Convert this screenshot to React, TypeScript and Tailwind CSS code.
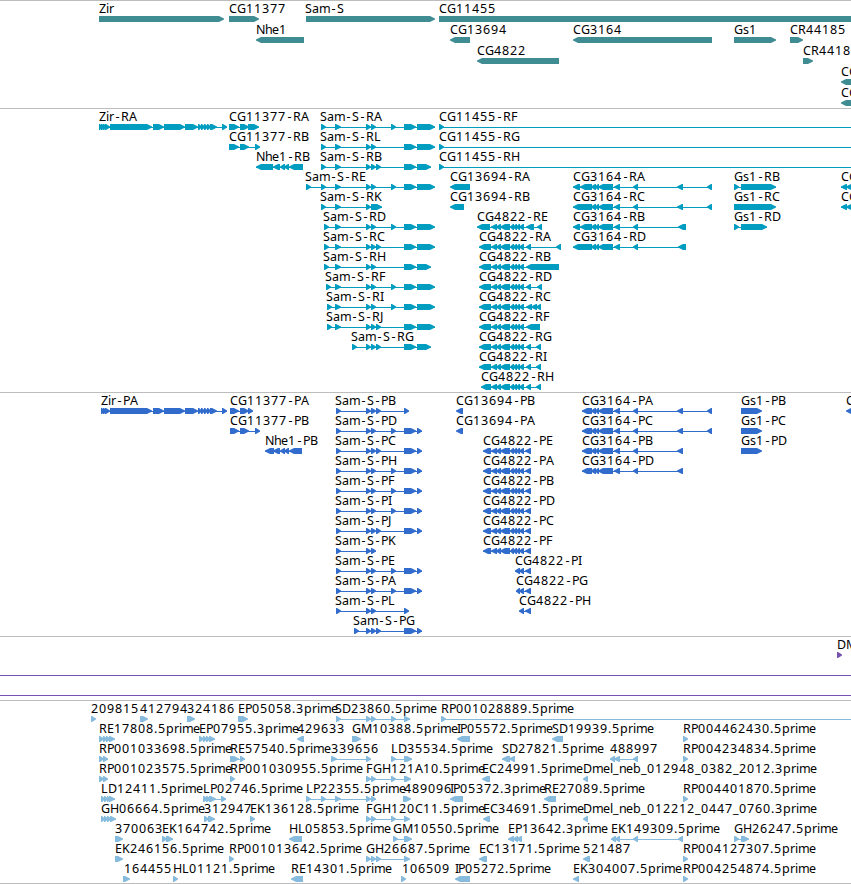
type Strand = '+' | '-'

// [row, label, label x, strand, exons]
type Feature = [number, string, number, Strand, string]

const ADVANCE: Record<string, number> = {
  '.': 4,
  '-': 7,
  _: 6,
  C: 8,
  D: 9,
  E: 7,
  F: 7,
  G: 9,
  H: 9,
  I: 3,
  J: 4,
  K: 8,
  L: 7,
  M: 11,
  N: 9,
  P: 7,
  R: 8,
  S: 7,
  Z: 7,
  a: 7,
  e: 7,
  h: 7,
  i: 3,
  l: 3,
  m: 11,
  n: 7,
  p: 8,
  r: 5,
  s: 6,
}

const genes: Feature[] = [
  [0, 'Zir', 99, '+', '99-224'],
  [0, 'CG11377', 229, '+', '229-259'],
  [0, 'Sam-S', 305, '+', '306-435'],
  [0, 'CG11455', 439, '+', '439-870'],
  [1, 'Nhe1', 256, '-', '256-304'],
  [1, 'CG13694', 450, '-', '450-470'],
  [1, 'CG3164', 573, '-', '573-712'],
  [1, 'Gs1', 734, '+', '734-776'],
  [1, 'CR44185', 790, '+', '790-803'],
  [2, 'CG4822', 477, '-', '477-559'],
  [2, 'CR44186', 803, '+', '803-813'],
  [3, 'CG', 841, '-', '841-870'],
  [4, 'CG', 841, '-', '841-870'],
]

const ZIR =
  '110-152 153-164 164-185 185-198 198-202 201-205 204-208 207-211 210-217 222-227'
const SAM_A = '335-341 366-371 371-376 391-396 404-416 417-435'
const SAM_B = '335-341 366-371 371-376 376-381 404-416 417-431'
const SAM_C = '335-341 366-371 371-376 376-381 404-416 417-435'
const CG48 =
  '491-497 496-501 500-510 510-514 513-517 516-520 519-524'
const CG31 = '591-596 595-599 598-613 614-620 633-638'

const transcripts: Feature[] = [
  [0, 'Zir-RA', 99, '+', '99-103 101-105 103-107 105-110 ' + ZIR],
  [0, 'CG11377-RA', 229, '+', '229-239 240-249 248-259'],
  [1, 'CG11377-RB', 229, '+', '229-239 240-249 255-260'],
  [2, 'Nhe1-RB', 256, '-', '256-273 273-280 280-285 284-289 289-303'],
  [0, 'Sam-S-RA', 320, '+', '321-326 ' + SAM_A],
  [1, 'Sam-S-RL', 320, '+', '321-326 ' + '335-341 366-371 371-376 404-416 417-435'],
  [2, 'Sam-S-RB', 320, '+', '321-326 ' + SAM_B],
  [3, 'Sam-S-RE', 305, '+', '306-311 321-326 ' + SAM_A],
  [4, 'Sam-S-RK', 320, '+', '321-326 335-341 366-371 371-382'],
  [5, 'Sam-S-RD', 323, '+', '324-329 ' + SAM_A],
  [6, 'Sam-S-RC', 323, '+', '324-329 ' + SAM_C],
  [7, 'Sam-S-RH', 323, '+', '324-329 335-341 366-371 371-376 404-416 417-431'],
  [8, 'Sam-S-RF', 325, '+', '326-331 ' + SAM_A],
  [9, 'Sam-S-RI', 326, '+', '327-332 ' + SAM_A],
  [10, 'Sam-S-RJ', 326, '+', '327-332 ' + SAM_C],
  [11, 'Sam-S-RG', 351, '+', '352-357 366-371 371-376 376-381 404-416 417-431'],
  [0, 'CG11455-RF', 439, '+', '439-444 870-875'],
  [1, 'CG11455-RG', 439, '+', '439-444 870-875'],
  [2, 'CG11455-RH', 439, '+', '439-444 870-875'],
  [3, 'CG13694-RA', 450, '-', '450-470'],
  [4, 'CG13694-RB', 450, '-', '450-464'],
  [5, 'CG4822-RE', 477, '-', '477-490 ' + CG48 + ' 526-534 537-542'],
  [6, 'CG4822-RA', 479, '-', '479-491 ' + CG48 + ' 526-531 556-561'],
  [7, 'CG4822-RB', 479, '-', '479-491 ' + CG48 + ' 526-559'],
  [8, 'CG4822-RD', 479, '-', '479-491 ' + CG48 + ' 526-531 537-542'],
  [9, 'CG4822-RC', 479, '-', '479-491 ' + CG48 + ' 526-532 531-537 536-541'],
  [10, 'CG4822-RF', 479, '-', '479-491 ' + CG48 + ' 526-540'],
  [11, 'CG4822-RG', 479, '-', '479-491 ' + CG48 + ' 526-531 536-541'],
  [12, 'CG4822-RI', 479, '-', '479-491 ' + CG48 + ' 526-531 536-541'],
  [13, 'CG4822-RH', 481, '-', '481-491 ' + CG48 + ' 526-531 536-541'],
  [3, 'CG3164-RA', 573, '-', '573-580 580-592 ' + CG31 + ' 677-683 707-712'],
  [4, 'CG3164-RC', 573, '-', '573-592 ' + CG31 + ' 677-683 707-712'],
  [5, 'CG3164-RB', 573, '-', '573-580 580-592 ' + CG31 + ' 678-686'],
  [6, 'CG3164-RD', 573, '-', '573-592 ' + CG31 + ' 678-686'],
  [3, 'Gs1-RB', 734, '+', '734-739 741-776'],
  [4, 'Gs1-RC', 734, '+', '734-776'],
  [5, 'Gs1-RD', 734, '+', '734-739 741-767'],
  [3, 'CG', 841, '-', '841-847 846-853'],
  [4, 'CG', 841, '-', '841-847 846-853'],
]

const SAM_P = '336-341 366-371 371-376 391-396 404-416 417-422'
const SAM_Q = '336-341 366-371 371-376 376-381 404-416 417-422'
const CG48_P = '483-491 ' + CG48 + ' 525-531'

const proteins: Feature[] = [
  [0, 'Zir-PA', 101, '+', '101-105 103-107 105-110 ' + ZIR],
  [0, 'CG11377-PA', 230, '+', '230-239 240-249 248-253'],
  [1, 'CG11377-PB', 230, '+', '230-239 240-249 255-260'],
  [2, 'Nhe1-PB', 265, '-', '265-274 273-280 280-285 284-289 289-302'],
  [0, 'Sam-S-PB', 335, '+', '336-341 366-371 371-376 376-381 404-409'],
  [1, 'Sam-S-PD', 335, '+', SAM_P],
  [2, 'Sam-S-PC', 335, '+', SAM_Q],
  [3, 'Sam-S-PH', 335, '+', SAM_P],
  [4, 'Sam-S-PF', 335, '+', SAM_P],
  [5, 'Sam-S-PI', 335, '+', SAM_P],
  [6, 'Sam-S-PJ', 335, '+', SAM_Q],
  [7, 'Sam-S-PK', 335, '+', '336-341 366-371 371-376'],
  [8, 'Sam-S-PE', 335, '+', SAM_P],
  [9, 'Sam-S-PA', 335, '+', SAM_P],
  [10, 'Sam-S-PL', 335, '+', '336-341 366-371 371-376 404-409'],
  [11, 'Sam-S-PG', 353, '+', '354-359 366-371 371-376 376-381 404-416 417-422'],
  [0, 'CG13694-PB', 456, '-', '456-463'],
  [1, 'CG13694-PA', 456, '-', '456-463'],
  [2, 'CG4822-PE', 483, '-', CG48_P],
  [3, 'CG4822-PA', 483, '-', CG48_P],
  [4, 'CG4822-PB', 483, '-', CG48_P],
  [5, 'CG4822-PD', 483, '-', CG48_P],
  [6, 'CG4822-PC', 483, '-', CG48_P],
  [7, 'CG4822-PF', 483, '-', CG48_P],
  [8, 'CG4822-PI', 515, '-', '515-520 519-524 525-531'],
  [9, 'CG4822-PG', 516, '-', '516-520 519-524 525-531'],
  [10, 'CG4822-PH', 519, '-', '519-524 525-531'],
  [0, 'CG3164-PA', 582, '-', '582-592 ' + CG31 + ' 677-683 707-712'],
  [1, 'CG3164-PC', 582, '-', '582-592 ' + CG31 + ' 677-683 707-712'],
  [2, 'CG3164-PB', 582, '-', '582-592 ' + CG31 + ' 677-683'],
  [3, 'CG3164-PD', 582, '-', '582-592 ' + CG31 + ' 677-683'],
  [0, 'Gs1-PB', 741, '+', '741-762'],
  [1, 'Gs1-PC', 741, '+', '741-762'],
  [2, 'Gs1-PD', 741, '+', '741-762'],
  [0, 'CG', 846, '-', '846-853'],
]

const insertions: Feature[] = [[0, 'DM', 837, '+', '837-842']]

const ests: Feature[] = [
  [0, '209815', 91, '+', '91-96'],
  [0, '412794', 140, '+', '140-148'],
  [0, '324186', 187, '+', '187-195'],
  [0, 'EP05058.3prime', 238, '+', '238-248'],
  [0, 'SD23860.5prime', 335, '+', '336-341 366-371 371-376 391-396 404-410'],
  [0, 'RP001028889.5prime', 441, '+', '441-446 870-875'],
  [1, 'RE17808.5prime', 99, '+', '99-104 103-107 106-110 109-115'],
  [1, 'EP07955.3prime', 199, '+', '199-204 203-207 206-210 209-215'],
  [1, '429633', 297, '-', '297-304'],
  [1, 'GM10388.5prime', 352, '+', '352-361'],
  [1, 'IP05572.5prime', 457, '-', '457-470'],
  [1, 'SD19939.5prime', 552, '-', '552-563'],
  [1, 'RP004462430.5prime', 683, '+', '683-688'],
  [2, 'RP001033698.5prime', 99, '+', '99-104 103-108'],
  [2, 'RE57540.5prime', 230, '+', '230-239 240-245'],
  [2, '339656', 331, '+', '331-337 366-371'],
  [2, 'LD35534.5prime', 391, '+', '391-396 404-412'],
  [2, 'SD27821.5prime', 502, '-', '502-510 509-515'],
  [2, '488997', 610, '-', '610-615 614-620 633-638'],
  [2, 'RP004234834.5prime', 683, '+', '683-688'],
  [3, 'RP001023575.5prime', 99, '+', '99-104 103-108'],
  [3, 'RP001030955.5prime', 230, '+', '230-235'],
  [3, 'FGH121A10.5prime', 366, '+', '366-371 371-376 391-396 404-411'],
  [3, 'EC24991.5prime', 482, '-', '482-490'],
  [3, 'Dmel_neb_012948_0382_2012.3prime', 583, '-', '583-588'],
  [4, 'LD12411.5prime', 101, '+', '101-105 104-108 107-110 109-115'],
  [4, 'LP02746.5prime', 203, '+', '203-208 206-211 209-216 221-226'],
  [4, 'LP22355.5prime', 306, '+', '306-311 321-326 335-341 366-371 371-376'],
  [4, '489096', 404, '+', '403-411'],
  [4, 'IP05372.3prime', 450, '-', '450-463'],
  [4, 'RE27089.5prime', 544, '-', '544-556'],
  [4, 'RP004401870.5prime', 683, '+', '683-688'],
  [5, 'GH06664.5prime', 101, '+', '101-105 104-108 107-111 110-116'],
  [5, '312947', 204, '+', '204-209 208-215'],
  [5, 'EK136128.5prime', 250, '+', '250-255'],
  [5, 'FGH120C11.5prime', 366, '+', '366-371 371-376 391-396 404-410'],
  [5, 'EC34691.5prime', 483, '-', '483-490'],
  [5, 'Dmel_neb_012212_0447_0760.3prime', 583, '-', '583-588'],
  [6, '370063', 115, '+', '115-123'],
  [6, 'EK164742.5prime', 162, '+', '162-167 166-173'],
  [6, 'HL05853.5prime', 289, '-', '289-302'],
  [6, 'GM10550.5prime', 393, '+', '393-398 404-412'],
  [6, 'EP13642.3prime', 508, '-', '508-514 513-518 516-522'],
  [6, 'EK149309.5prime', 611, '-', '611-616 615-620 633-638 678-683'],
  [6, 'GH26247.5prime', 734, '+', '734-739 741-749'],
  [7, 'EK246156.5prime', 115, '+', '115-123'],
  [7, 'RP001013642.5prime', 229, '+', '229-234'],
  [7, 'GH26687.5prime', 366, '+', '366-371 371-376 376-381 404-410'],
  [7, 'EC13171.5prime', 479, '-', '479-487'],
  [7, '521487', 583, '-', '583-590'],
  [7, 'RP004127307.5prime', 683, '+', '683-688'],
  [8, '164455', 124, '+', '123-130'],
  [8, 'HL01121.5prime', 173, '+', '173-178'],
  [8, 'RE14301.5prime', 291, '-', '291-303'],
  [8, '106509', 402, '+', '401-406'],
  [8, 'IP05272.5prime', 455, '-', '455-470'],
  [8, 'EK304007.5prime', 573, '-', '573-579'],
  [8, 'RP004254874.5prime', 683, '+', '683-688'],
]

function glyphPositions(label: string, start: number) {
  let x = start
  return label
    .split('')
    .map((char) => {
      // the hyphen is narrow, so centre it in its cell
      const current = char === '-' ? x + 1.5 : x
      x += ADVANCE[char] ?? 8
      return current
    })
    .join(' ')
}

function arrowPoints(a: number, b: number, y: number, strand: Strand) {
  const head = Math.min(5, b - a - 1)
  return strand === '+'
    ? `${a},${y} ${b - head},${y} ${b},${y + 2.5} ${b},${y + 3.5} ${b - head},${y + 6} ${a},${y + 6}`
    : `${b},${y} ${a + head},${y} ${a},${y + 2.5} ${a},${y + 3.5} ${a + head},${y + 6} ${b},${y + 6}`
}

interface TrackProps {
  features: Feature[]
  className: string
  baseline: number
  pitch?: number
}

function Track({ features, className, baseline, pitch = 20 }: TrackProps) {
  return (
    <section className={`border-t border-[#bdbdbd] ${className}`}>
      <svg className="block w-full h-full overflow-hidden" fill="currentColor">
        {features.map(([row, label, x, strand, exons]) => {
          const textY = baseline + row * pitch
          const y = textY + 3
          const boxes = exons.split(' ').map((e) => e.split('-').map(Number))
          const start = boxes[0][0]
          const end = boxes[boxes.length - 1][1]

          return (
            <g key={`${row}-${label}-${x}`}>
              {boxes.length > 1 && (
                <rect x={start} y={y + 3} width={end - start} height={1} />
              )}
              {boxes.map(([a, b]) => (
                <polygon key={a} points={arrowPoints(a, b, y, strand)} />
              ))}
              <text
                x={glyphPositions(label, x)}
                y={textY}
                className="fill-black text-[12.5px]"
              >
                {label}
              </text>
            </g>
          )
        })}
      </svg>
    </section>
  )
}

export default function App() {
  return (
    <main className="w-full h-[884px] flex flex-col overflow-hidden bg-white font-['Noto_Sans',sans-serif]">
      <Track
        features={genes}
        className="h-[108px] text-[#3f8d93]"
        baseline={12}
        pitch={21}
      />
      <Track
        features={transcripts}
        className="h-[284px] text-[#009dc0]"
        baseline={12}
      />
      <Track
        features={proteins}
        className="h-[244px] text-[#316ccc]"
        baseline={12}
      />
      <Track
        features={insertions}
        className="h-[39px] text-[#7553ae]"
        baseline={12}
      />
      <div className="h-[21px] border-y border-[#7553ae]" />
      <div className="h-1" />
      <Track
        features={ests}
        className="h-[183px] text-[#87bbdd]"
        baseline={12}
      />
      <div className="h-px bg-[#bdbdbd]" />
    </main>
  )
}
